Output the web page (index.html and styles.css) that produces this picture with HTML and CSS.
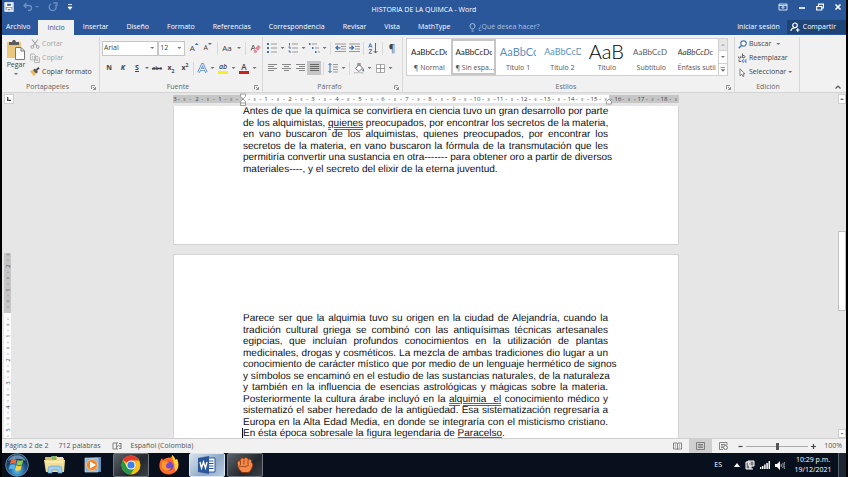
FILE: index.html
```html
<!DOCTYPE html>
<html lang="es">
<head>
<meta charset="utf-8">
<title>HISTORIA DE LA QUIMCA - Word</title>
<link rel="stylesheet" href="styles.css">
</head>
<body>
<div class="window">
  <header class="titlebar">
    <div class="quick">
      <button aria-label="Guardar"><svg width="10" height="10" viewBox="0 0 10 10"><path d="M1 1h8v8H1z M2.500 1v3.500h5V1 M3 9V6.500h4V9" fill="none" stroke="#fff" stroke-width="1.300"/></svg></button>
      <button class="dim" aria-label="Deshacer"><svg width="10" height="10" viewBox="0 0 10 10"><path d="M3.500 1 1 3.500 3.500 6 M1 3.500h5a2.500 2.500 0 0 1 0 5H5" fill="none" stroke="currentColor" stroke-width="1.300"/></svg><i class="caret"></i></button>
      <button class="dim" aria-label="Rehacer"><svg width="10" height="10" viewBox="0 0 10 10"><path d="M3 2a3.500 3.500 0 1 0 4.500 1 M5.500 1H9v3" fill="none" stroke="currentColor" stroke-width="1.300"/></svg></button>
      <button class="more" aria-label="Personalizar"><svg width="6" height="8" viewBox="0 0 6 8"><path d="M1 1.500h4M1 4l2 2.500L5 4z" fill="#fff" stroke="#fff" stroke-width=".8"/></svg></button>
    </div>
    <h1>HISTORIA DE LA QUIMCA - Word</h1>
    <div class="controls">
      <button aria-label="Opciones de la cinta"><svg width="10" height="8" viewBox="0 0 10 8"><path d="M1 1h8v6H1z M1 2.500h8 M5 6V3.500 M3.500 5 5 3.500 6.500 5" fill="none" stroke="#fff" stroke-width=".8"/></svg></button>
      <button aria-label="Minimizar"><svg width="8" height="8" viewBox="0 0 8 8"><path d="M1 5h6" stroke="#fff" stroke-width="1.600"/></svg></button>
      <button aria-label="Restaurar"><svg width="8" height="8" viewBox="0 0 8 8"><path d="M2.500 3V1.200h5V5H6 M.7 3.500h5V7h-5z" fill="none" stroke="#fff" stroke-width="1.200"/></svg></button>
      <button aria-label="Cerrar"><svg width="8" height="8" viewBox="0 0 8 8"><path d="M1.500 1.500l5 5M6.500 1.500l-5 5" stroke="#fff" stroke-width="1.600"/></svg></button>
    </div>
  </header>

  <nav class="tabs">
    <button class="file">Archivo</button>
    <button class="active">Inicio</button>
    <button>Insertar</button>
    <button>Diseño</button>
    <button>Formato</button>
    <button>Referencias</button>
    <button>Correspondencia</button>
    <button>Revisar</button>
    <button>Vista</button>
    <button>MathType</button>
    <button class="tell"><svg width="7" height="9" viewBox="0 0 7 9"><path d="M2.500 6C2 5 1 4.500 1 3a2.500 2.500 0 0 1 5 0c0 1.500-1 2-1.500 3z M2.500 8h2" fill="none" stroke="currentColor"/></svg>¿Qué desea hacer?</button>
    <button class="login">Iniciar sesión</button>
    <button class="share"><svg width="10" height="10" viewBox="0 0 10 10"><circle cx="5" cy="3.300" r="2.300" fill="none" stroke="#fff" stroke-width="1.200"/><path d="M1 9c0-2 1.500-3 3.500-3.200M6 8h3.500M7.700 6.200v3.500" fill="none" stroke="#fff" stroke-width="1.200"/></svg>Compartir</button>
  </nav>

  <section class="ribbon">
    <div class="group clip">
      <div class="clip-body">
        <button class="paste"><svg width="20" height="20" viewBox="0 0 20 20"><path d="M1 2h14v16H1z" fill="#e9c77d"/><path d="M3 2h3l1-2h2l1 2h3v3H3z" fill="#5b5b5b"/><path d="M9.500 7.500h5.500l3.500 3.500v8.500h-9z" fill="#fff" stroke="#777"/><path d="M15 7.500V11h3.500" fill="none" stroke="#777"/></svg>Pegar<i class="caret"></i></button>
        <div class="clip-list">
          <button class="off"><svg width="10" height="10" viewBox="0 0 10 10"><path d="M2 .5 7 7M8 .5 3 7" stroke="#a5a5a5" stroke-width="1.200"/><circle cx="2.300" cy="8" r="1.400" fill="none" stroke="#a5a5a5"/><circle cx="7.700" cy="8" r="1.400" fill="none" stroke="#a5a5a5"/></svg>Cortar</button>
          <button class="off"><svg width="10" height="10" viewBox="0 0 10 10"><path d="M.5 1h3.500l1.500 1.500V7h-5z M4.500 3.500H8l1.500 1.500v4.500h-5z M6 6h2M6 7.500h2M2 3.500h1M2 5h1" fill="#eee" stroke="#aaa" stroke-width=".8"/></svg>Copiar</button>
          <button><svg width="10" height="10" viewBox="0 0 10 10"><path d="M0 4l3-1 3 3-2 3.500C3 8 1 6 0 4z" fill="#e8bd68"/><path d="M3 3l2-1.500L8 5 6 6.500z" fill="#555"/><path d="M6.500 3 9 .8" stroke="#444" stroke-width="1.800"/></svg>Copiar formato</button>
        </div>
      </div>
      <div class="caption"><span>Portapapeles</span><svg class="launch" width="5" height="5" viewBox="0 0 5 5"><path d="M.5 4V.5H4M2 2l2.500 2.500M4.500 2v2.500H2" fill="none" stroke="#777" stroke-width=".8"/></svg></div>
    </div>

    <div class="group">
      <div class="row">
        <label class="combo face"><select aria-label="Fuente"><option>Arial</option></select><i class="caret"></i></label>
        <label class="combo size"><select aria-label="Tamaño"><option>12</option></select><i class="caret"></i></label>
        <button class="tool big" aria-label="Aumentar">A<sup class="up"></sup></button>
        <button class="tool" aria-label="Reducir">A<sup class="down"></sup></button>
        <i class="sep"></i>
        <button class="tool drop wide"><span>Aa</span><i class="caret"></i></button>
        <i class="sep"></i>
        <button class="tool" aria-label="Borrar formato"><svg width="11" height="11" viewBox="0 0 11 11"><path d="M1 7.500 3.200 2l2 4M2 5.500h2" fill="none" stroke="#666"/><path d="M3.500 7.500 8 2l2.700 2L6.500 9.500 4.500 10z" fill="#e4879a"/><path d="M5 6l3 2.200" stroke="#fff" stroke-width=".7"/></svg></button>
      </div>
      <div class="row">
        <button class="tool bold">N</button>
        <button class="tool bold ital">K</button>
        <button class="tool bold drop s"><span class="ul">S</span><i class="caret"></i></button>
        <button class="tool strike">abc</button>
        <button class="tool bold">x<sub>2</sub></button>
        <button class="tool bold">x<sup>2</sup></button>
        <i class="sep thin"></i>
        <button class="tool drop" aria-label="Efectos de texto"><svg width="11" height="11" viewBox="0 0 11 11"><path d="M1.500 9.500 5.500 1l4 8.500M3.500 6.500h4" fill="none" stroke="#5f8fce" stroke-width="2.600"/><path d="M1.500 9.500 5.500 1l4 8.500M3.500 6.500h4" fill="none" stroke="#f5f9ff" stroke-width="1"/></svg><i class="caret"></i></button>
        <button class="tool drop mark"><span>ab</span><i class="caret"></i></button>
        <button class="tool drop color"><span>A</span><i class="caret"></i></button>
      </div>
      <div class="caption"><span>Fuente</span><svg class="launch" width="5" height="5" viewBox="0 0 5 5"><path d="M.5 4V.5H4M2 2l2.500 2.500M4.500 2v2.500H2" fill="none" stroke="#777" stroke-width=".8"/></svg></div>
    </div>

    <div class="group">
      <div class="row">
        <button class="tool drop" aria-label="Viñetas"><svg width="10" height="10" viewBox="0 0 10 10"><path d="M0 1h2M0 5h2M0 9h2" stroke="#3f6fae" stroke-width="1.800"/><path d="M4 1h6M4 5h6M4 9h6" stroke="#999"/></svg><i class="caret"></i></button>
        <button class="tool drop" aria-label="Numeración"><svg width="10" height="10" viewBox="0 0 10 10"><path d="M1.500 0v2.500M.5 4h1.500v2M.5 8h1.500v2" fill="none" stroke="#3f6fae"/><path d="M4 1h6M4 5h6M4 9h6" stroke="#999"/></svg><i class="caret"></i></button>
        <button class="tool drop" aria-label="Lista multinivel"><svg width="11" height="10" viewBox="0 0 11 10"><path d="M0 1h1.500M3 5h1.500M6 9h1.500" stroke="#3f6fae" stroke-width="1.800"/><path d="M3 1h5M6 5h4M9 9h2" stroke="#999"/></svg><i class="caret"></i></button>
        <i class="sep"></i>
        <button class="tool" aria-label="Disminuir sangría"><svg width="11" height="10" viewBox="0 0 11 10"><path d="M0 1h11M6 3.500h5M6 6h5M0 8.500h11" stroke="#999"/><path d="M5.500 4.800H1M3 2.800l-2 2 2 2" fill="none" stroke="#3f6fae" stroke-width="1.300"/></svg></button>
        <button class="tool" aria-label="Aumentar sangría"><svg width="11" height="10" viewBox="0 0 11 10"><path d="M0 1h11M6 3.500h5M6 6h5M0 8.500h11" stroke="#999"/><path d="M0 4.800h4.500M2.500 2.800l2 2-2 2" fill="none" stroke="#3f6fae" stroke-width="1.300"/></svg></button>
        <i class="sep"></i>
        <button class="tool" aria-label="Ordenar"><svg width="10" height="11" viewBox="0 0 10 11"><path d="M.7 4.500 2.300.5 4 4.500M1.200 3.300h2.200M1 6.500h2.800L1 10.300h3" fill="none" stroke="#3f6fae" stroke-width=".9"/><path d="M7.500 0v10M5.500 8l2 2 2-2" fill="none" stroke="#666"/></svg></button>
        <i class="sep"></i>
        <button class="tool pilcrow">¶</button>
      </div>
      <div class="row">
        <button class="tool" aria-label="Alinear a la izquierda"><svg width="9" height="8" viewBox="0 0 9 8"><path d="M0 .5h9M0 2.500h6M0 4.500h9M0 6.500h6" stroke="#888"/></svg></button>
        <button class="tool" aria-label="Centrar"><svg width="9" height="8" viewBox="0 0 9 8"><path d="M0 .5h9M2 2.500h5M0 4.500h9M2 6.500h5" stroke="#888"/></svg></button>
        <button class="tool" aria-label="Alinear a la derecha"><svg width="9" height="8" viewBox="0 0 9 8"><path d="M0 .5h9M3 2.500h6M0 4.500h9M3 6.500h6" stroke="#888"/></svg></button>
        <button class="tool on" aria-label="Justificar"><svg width="9" height="8" viewBox="0 0 9 8"><path d="M0 .5h9M0 2.500h9M0 4.500h9M0 6.500h9" stroke="#666"/></svg></button>
        <i class="sep"></i>
        <button class="tool drop" aria-label="Interlineado"><svg width="10" height="10" viewBox="0 0 10 10"><path d="M2 .5v9M.5 2 2 .5 3.500 2M.5 8 2 9.500 3.500 8" fill="none" stroke="#3f6fae"/><path d="M5 1.500h5M5 4h5M5 6.500h5M5 9h5" stroke="#999"/></svg><i class="caret"></i></button>
        <i class="sep"></i>
        <button class="tool drop" aria-label="Sombreado"><svg width="11" height="11" viewBox="0 0 11 11"><path d="M5 1.500 1.500 5.500 5 8.500 8.500 5z M4 3V0h2v3" fill="#fff" stroke="#666" stroke-width=".9"/><path d="M9 5c1 1.500 1.500 3 .5 3.500S8 7 9 5z" fill="#3f6fae"/><path d="M0 9.500h9v1.500H0z" fill="#fff" stroke="#999" stroke-width=".5"/></svg><i class="caret"></i></button>
        <button class="tool drop" aria-label="Bordes"><svg width="9" height="9" viewBox="0 0 9 9"><path d="M.5.5h8v8h-8z" fill="#fff" stroke="#aaa"/><path d="M4.500 0v9M0 4.500h9" stroke="#999"/></svg><i class="caret"></i></button>
      </div>
      <div class="caption"><span>Párrafo</span><svg class="launch" width="5" height="5" viewBox="0 0 5 5"><path d="M.5 4V.5H4M2 2l2.500 2.500M4.500 2v2.500H2" fill="none" stroke="#777" stroke-width=".8"/></svg></div>
    </div>

    <div class="group styles">
      <div class="gallery">
        <button><span class="sample">AaBbCcDc</span><span class="name">¶ Normal</span></button>
        <button class="chosen"><span class="sample">AaBbCcDc</span><span class="name">¶ Sin espa...</span></button>
        <button><span class="sample h1">AaBbCc</span><span class="name">Título 1</span></button>
        <button><span class="sample h2">AaBbCcD</span><span class="name">Título 2</span></button>
        <button><span class="sample title">AaB</span><span class="name">Título</span></button>
        <button><span class="sample sub">AaBbCcD</span><span class="name">Subtítulo</span></button>
        <button><span class="sample em">AaBbCcDc</span><span class="name">Énfasis sutil</span></button>
        <div class="pager">
          <button class="offp" aria-label="Anterior"><i class="caret flip"></i></button>
          <button aria-label="Siguiente"><i class="caret"></i></button>
          <button aria-label="Más"><i class="caret bar"></i></button>
        </div>
      </div>
      <div class="caption"><span>Estilos</span><svg class="launch" width="5" height="5" viewBox="0 0 5 5"><path d="M.5 4V.5H4M2 2l2.500 2.500M4.500 2v2.500H2" fill="none" stroke="#777" stroke-width=".8"/></svg></div>
    </div>

    <div class="group">
      <div class="edit-list">
        <button><svg width="9" height="9" viewBox="0 0 9 9"><circle cx="5.500" cy="3.500" r="2.700" fill="#fff" stroke="#4a79b5" stroke-width="1.200"/><path d="M3.500 5.500.8 8.200" stroke="#4a79b5" stroke-width="1.600"/></svg>Buscar <i class="caret far"></i></button>
        <button><svg width="9" height="10" viewBox="0 0 9 10"><path d="M.5 3.500a1.200 1.200 0 1 0 2.200 0V5M4.500.5v4M4.500 3.500a1.200 1.200 0 1 1 0 .5M1 6.500v2h2" fill="none" stroke="#555" stroke-width=".9"/><path d="M6 7a1.200 1.200 0 1 0 0 2M8.700 7a1.200 1.200 0 1 0 0 2" fill="none" stroke="#3f6fae"/></svg>Reemplazar</button>
        <button><svg width="9" height="9" viewBox="0 0 9 9"><path d="M2 .8v7l1.700-1.600L5 8.600l1-.5-1-2.300h2z" fill="#fff" stroke="#666" stroke-width=".8"/></svg>Seleccionar<i class="caret"></i></button>
      </div>
      <div class="caption"><span>Edición</span></div>
    </div>
    <button class="collapse" aria-label="Contraer"><svg width="6" height="4" viewBox="0 0 6 4"><path d="M.5 3.500 3 1l2.500 2.500" fill="none" stroke="#555" stroke-width="1.200"/></svg></button>
  </section>

  <main class="work">
    <div class="desk">
      <div class="topruler">
        <div class="tabstop"><svg width="4" height="4" viewBox="0 0 4 4"><path d="M.7 0v3.300H4" fill="none" stroke="#444" stroke-width="1.300"/></svg></div>
        <svg class="hruler" width="506" height="13" viewBox="0 0 506 13">
          <defs><pattern id="hm" x="70" width="23.400" height="14" patternUnits="userSpaceOnUse"><path d="M5.500 6.500h1M17 6.500h1M11.700 5v3" stroke="#777"/></pattern></defs>
          <rect y="2" width="506" height="8" fill="#c6c6c6"/>
          <rect x="70" y="2" width="366" height="8" fill="#fff"/>
          <rect y="2" width="506" height="8" fill="url(#hm)"/>
          <g class="nums">
            <text x="2" y="8">3</text><text x="24" y="8">2</text><text x="47" y="8">1</text>
            <text x="93" y="8">1</text><text x="117" y="8">2</text><text x="140" y="8">3</text><text x="164" y="8">4</text><text x="187" y="8">5</text><text x="210" y="8">6</text><text x="234" y="8">7</text><text x="257" y="8">8</text><text x="281" y="8">9</text><text x="304" y="8">10</text><text x="327" y="8">11</text><text x="351" y="8">12</text><text x="374" y="8">13</text><text x="398" y="8">14</text><text x="421" y="8">15</text><text x="445" y="8">16</text><text x="468" y="8">17</text><text x="491" y="8">18</text>
          </g>
          <path d="M67.500 1h5v2.500L70 6l-2.500-2.500z M70 6l2.500 2.500v4h-5v-4z M67.500 10h5 M436 6l2.500 2.500V11h-5V8.500z" fill="#fff" stroke="#888" stroke-width=".8"/>
        </svg>
      </div>
      <div class="canvas">
        <svg class="vruler" width="7" height="185" viewBox="0 0 7 185">
          <defs><pattern id="vm" y="60" width="7" height="23.400" patternUnits="userSpaceOnUse"><path d="M4 5.500v1M4 17v1M2.500 11.700h3" stroke="#777"/></pattern></defs>
          <rect width="7" height="60" fill="#c6c6c6"/>
          <rect y="60" width="7" height="126" fill="#fff"/>
          <rect width="7" height="186" fill="url(#vm)"/>
          <g class="nums">
            <text transform="translate(6 13) rotate(-90)">2</text><text transform="translate(6 37) rotate(-90)">1</text><text transform="translate(6 83) rotate(-90)">1</text><text transform="translate(6 107) rotate(-90)">2</text><text transform="translate(6 130) rotate(-90)">3</text><text transform="translate(6 154) rotate(-90)">4</text><text transform="translate(6 177) rotate(-90)">5</text>
          </g>
        </svg>
        <div class="pages">
          <article class="page first">
            <p>Antes de que la química se convirtiera en ciencia tuvo un gran desarrollo por parte<br>
            de los alquimistas, <span class="gram">quienes</span> preocupados, por encontrar los secretos de la materia,<br>
            en vano buscaron de los alquimistas, quienes preocupados, por encontrar los<br>
            secretos de la materia, en vano buscaron la fórmula de la transmutación que les<br>
            permitiría convertir una sustancia en otra------- para obtener oro a partir de diversos<br>
            <span class="last">materiales----, y el secreto del elixir de la eterna juventud.</span></p>
          </article>
          <article class="page second">
            <p>Parece ser que la alquimia tuvo su origen en la ciudad de Alejandría, cuando la<br>
            tradición cultural griega se combinó con las antiquísimas técnicas artesanales<br>
            egipcias, que incluían profundos conocimientos en la utilización de plantas<br>
            medicinales, drogas y cosméticos. La mezcla de ambas tradiciones dio lugar a un<br>
            conocimiento de carácter místico que por medio de un lenguaje hermético de signos<br>
            y símbolos se encaminó en el estudio de las sustancias naturales, de la naturaleza<br>
            y también en la influencia de esencias astrológicas y mágicas sobre la materia.<br>
            Posteriormente la cultura árabe incluyó en la <span class="gram">alquimia&nbsp; el</span> conocimiento médico y<br>
            sistematizó el saber heredado de la antigüedad. Esa sistematización regresaría a<br>
            Europa en la Alta Edad Media, en donde se integraría con el misticismo cristiano.<br>
            <span class="last cursor">En ésta época sobresale la figura legendaria de <span class="spell">Paracelso</span>.</span></p>
          </article>
        </div>
      </div>
    </div>
    <div class="scroll">
      <button aria-label="Subir"><i class="caret flip"></i></button>
      <span class="thumb"></span>
      <button class="dn" aria-label="Bajar"><i class="caret"></i></button>
    </div>
  </main>

  <footer class="status">
    <span class="pg">Página 2 de 2</span>
    <span class="words">712 palabras</span>
    <svg class="proof" width="10" height="8" viewBox="0 0 10 8"><path d="M1 1h3.500v6H1z M4.500 1H6M4.500 7H6M7 1.500h2M7 4h2M7 6.500h2M9 1v6M6.500 3l-1.500 2" fill="none" stroke="#777" stroke-width=".9"/></svg>
    <span class="lang">Español (Colombia)</span>
    <button class="view" aria-label="Modo de lectura"><svg width="9" height="8" viewBox="0 0 9 8"><path d="M.5 1h3.500l.5.500.5-.5h3.500v6H5l-.5.500L4 7H.5z M4.500 1.500v6M2 3h1M2 5h1M6 3h1M6 5h1" fill="none" stroke="#777" stroke-width=".9"/></svg></button>
    <button class="view on" aria-label="Diseño de impresión"><svg width="9" height="8" viewBox="0 0 9 8"><path d="M.5.5h8v7h-8z M2 2.500h5M2 4h5M2 5.500h5" fill="none" stroke="#777" stroke-width=".9"/></svg></button>
    <button class="view" aria-label="Diseño web"><svg width="9" height="8" viewBox="0 0 9 8"><path d="M8 3V.5H.5v7H4 M2 2.500h4.500M2 4h2M2 5.500h2" fill="none" stroke="#777" stroke-width=".9"/><circle cx="6.500" cy="5.500" r="2" fill="#eee" stroke="#666" stroke-width=".9"/></svg></button>
    <button class="zoom" aria-label="Alejar"><svg width="5" height="5" viewBox="0 0 5 5"><path d="M.5 2.500h4" stroke="#444" stroke-width="1.200"/></svg></button>
    <input type="range" min="10" max="190" value="100" aria-label="Zoom">
    <button class="zoom" aria-label="Acercar"><svg width="5" height="5" viewBox="0 0 5 5"><path d="M0 2.500h5M2.500 0v5" stroke="#444" stroke-width="1.200"/></svg></button>
    <span class="pct">100%</span>
  </footer>

  <div class="taskbar">
    <button aria-label="Inicio de Windows"><svg width="24" height="24" viewBox="0 0 24 24"><defs><radialGradient id="orb" cy=".75"><stop offset="0" stop-color="#5fc6ee"/><stop offset=".6" stop-color="#2a6ea8"/><stop offset="1" stop-color="#163c66"/></radialGradient></defs><circle cx="12" cy="12" r="11.300" fill="url(#orb)" stroke="#7d9fbd" stroke-width=".8"/><path d="M3 8a10 10 0 0 1 18 0c-5-3-12-3-18 0z" fill="#a8c6df" opacity=".6"/><path d="M6 7c2-1.300 3.500-1.200 5.500-.3L10.500 11c-2-.9-3.500-.9-5.500.2z" fill="#ee6a35"/><path d="M12.500 7c2 1 3.500 1 5.800 0l-1.200 4.500c-2 1-3.600 1-5.600 0z" fill="#8fc84a"/><path d="M4.800 12.200c2-1.100 3.500-1.100 5.500-.2L9.200 16.400c-2-.9-3.500-.9-5.500.2z" fill="#55b3ec"/><path d="M11.200 12.500c2 1 3.600 1 5.600 0l-1.200 4.500c-2 1-3.500 1-5.500 0z" fill="#fbd143"/></svg></button>
    <button aria-label="Explorador"><svg width="22" height="20" viewBox="0 0 22 20"><path d="M1 2h6l1-1h5v2h7v13H2z" fill="#d8bd62"/><path d="M8 1h4v5H8z" fill="#7db76a"/><path d="M13 2h6v5h-6z" fill="#e9e6c0"/><path d="M0 5h21l-1 12H2z" fill="#f3df94"/><path d="M2 7h17" stroke="#fff5c8"/><path d="M4 18v-4a3 3 0 0 1 3-3h8a3 3 0 0 1 3 3v4h-4v-3H8v3z" fill="#9fcdec" stroke="#6da3cd" stroke-width=".7"/></svg></button>
    <button aria-label="Reproductor"><svg width="18" height="18" viewBox="0 0 18 18"><path d="M5 2l12-1v15L5 15z" fill="#638fb9"/><path d="M1 2h13v14H1z" fill="#8eb8da" stroke="#bdd9ee" stroke-width=".7"/><circle cx="8" cy="9" r="5.500" fill="#f08529" stroke="#f9be83"/><path d="M6 5.500 12 9l-6 3.500z" fill="#fff"/></svg></button>
    <button class="open" aria-label="Chrome"><svg width="20" height="20" viewBox="0 0 20 20"><circle cx="10" cy="10" r="9.500" fill="#fbc116"/><path d="M10 10 1.800 5.200A9.500 9.500 0 0 1 18.300 5.500H10z" fill="#e33b2e"/><path d="M1.800 5.200A9.500 9.500 0 0 0 9.500 19.500L14 12.200 6 12z" fill="#279847"/><circle cx="10" cy="10" r="4.600" fill="#fff"/><circle cx="10" cy="10" r="3.600" fill="#3f80e8"/></svg></button>
    <button aria-label="Firefox"><svg width="20" height="20" viewBox="0 0 20 20"><path d="M10 2.500C12 3 13 2 13 0c2 2 3 3 3.500 5L18 4c2 4 2 8 0 11-3 5-11 6-15 2C-1 13 0 7 3 3l1 2c1-1 3-2 6-2.500z" fill="#ff6a2b"/><path d="M13 0c2 2 3 3 3.500 5L18 4c2 5 1.500 9-1 12-2-2-1-5-2-8S13 3 13 0z" fill="#ffd33d"/><circle cx="10" cy="11" r="4.500" fill="#7948c9"/><path d="M3 7c2-2 5-1 7 1-2 0-3 1-3 3s2 3 5 2c-2 4-8 3-9-1z" fill="#ff9a28"/></svg></button>
    <button class="open current" aria-label="Word"><svg width="18" height="18" viewBox="0 0 18 18"><path d="M9 2h8v14H9z" fill="#fff" stroke="#2b579a"/><path d="M11 5h4.500M11 7.500h4.500M11 10h4.500M11 12.500h4.500" stroke="#2b579a"/><path d="M0 2 11 0v18L0 16z" fill="#2b579a"/><path d="M2 6l1.500 6 2-6 2 6L9 6" fill="none" stroke="#fff" stroke-width="1.400"/></svg></button>
    <button class="open" aria-label="Juego"><svg width="18" height="18" viewBox="0 0 18 18"><path d="M1.500 9c-1-3 1-5 2.500-4C4 2 7 1 8 3c1-2.500 4-1.500 4 .5 2-1 4 0 3.500 3 2 1 1.500 3 .5 5-1 3-2 4.500-4 5H6C4 15 2 12 1.500 9z" fill="#f58a48" stroke="#8c3812"/><path d="M4.500 5v4M8 3.500V8.500M12 4v4.500M3 10c4 1 7 1 10-1" fill="none" stroke="#8c3812" stroke-width=".8"/></svg></button>
    <div class="tray">
      <span class="es">ES</span>
      <svg width="6" height="4" viewBox="0 0 6 4"><path d="M3 0l3 4H0z" fill="#fff"/></svg>
      <svg width="10" height="10" viewBox="0 0 10 10"><path d="M1 2h4v7H1z M3 1h6v5H4z M6 6v3M5 9h3" fill="#777" stroke="#fff"/></svg>
      <svg width="10" height="8" viewBox="0 0 10 8"><path d="M.5 6v2M2.700 5v3M4.900 3.500V8M7.100 2v6M9.300 0v8" stroke="#fff" stroke-width="1.500"/></svg>
      <svg width="10" height="9" viewBox="0 0 10 9"><path d="M0 3h2l3-3v9L2 6H0z" fill="#fff"/><path d="M6.200 3v3M7.700 2c.8 1.500.8 3.500 0 5M9.200 1c1 2 1 5 0 7" fill="none" stroke="#ccc" stroke-width=".8"/></svg>
      <time datetime="2021-12-19T22:29">10:29 p.m.<br>19/12/2021</time>
      <span class="peek"></span>
    </div>
  </div>
</div>
</body>
</html>
```
FILE: styles.css
```css
* { box-sizing: border-box; }
body {
  margin: 0;
  background: #000;
  font-family: "Open Sans", "Noto Sans", sans-serif;
  font-size: 7px;
  line-height: 10px;
  color: #444;
}
button, select {
  margin: 0;
  padding: 0;
  border: 0;
  background: none;
  font: inherit;
  color: inherit;
  white-space: nowrap;
}
svg { display: block; flex: none; }
.window {
  display: flex;
  flex-direction: column;
  height: 100vh;
  margin: 0 2px;
  background: #e6e6e6;
  overflow: hidden;
}
.caret {
  flex: none;
  width: 4px;
  height: 2px;
  background: currentColor;
  opacity: .75;
  clip-path: polygon(0 0, 100% 0, 50% 100%);
}
.caret.flip { clip-path: polygon(50% 0, 100% 100%, 0 100%); }
.caret.bar { height: 5px; width: 5px; clip-path: polygon(0 0, 100% 0, 100% 20%, 0 20%, 0 50%, 100% 50%, 50% 100%, 0 50%); }

/* Title bar */
.titlebar {
  display: grid;
  grid-template-columns: 1fr auto 1fr;
  height: 20px;
  background: #2a579a;
  color: #fff;
}
.titlebar h1 { margin: 0; padding-top: 5px; font-size: 7px; font-weight: 400; }
.quick { display: flex; align-items: center; gap: 9px; height: 14px; padding-left: 2px; }
.quick button { display: flex; align-items: center; gap: 2px; }
.dim { color: #6d8fc2; }
.controls { display: flex; justify-content: flex-end; align-items: center; gap: 10px; height: 14px; padding-right: 4px; }

/* Tabs */
.tabs { display: flex; height: 15px; background: #2a579a; color: #fff; border-bottom: 1px solid #2a579a; }
.tabs button { padding: 0 9px; }
.tabs .file { padding: 0 8px 0 4px; }
.tabs .active { background: #f1f1f1; color: #2a579a; margin-bottom: -1px; }
.tabs .tell { display: flex; align-items: center; gap: 3px; color: #a9c0e2; }
.tabs .login { margin-left: auto; padding-right: 7px; }
.tabs .share { display: flex; align-items: center; gap: 3px; padding: 0 10px 0 3px; background: #1e4377; }

/* Ribbon */
.ribbon {
  display: grid;
  grid-template-columns: 98px 163px 140px 1fr 65px 46px;
  height: 58px;
  background: #f1f1f1;
  border-bottom: 1px solid #d4d4d4;
}
.group {
  display: flex;
  flex-direction: column;
  margin: 2px 0 0;
  padding-left: 2px;
  border-right: 1px solid #d8d8d8;
  min-width: 0;
}
.caption { display: flex; align-items: center; margin-top: auto; height: 10px; color: #666; }
.caption span { flex: 1; text-align: center; }
.launch { margin-right: 3px; }
.clip-body { display: flex; }
.paste { display: flex; flex-direction: column; align-items: center; width: 24px; padding-top: 3px; }
.paste .caret { margin-top: 3px; }
.clip-list, .edit-list { display: flex; flex-direction: column; gap: 4px; padding-top: 2px; }
.clip-list button, .edit-list button { display: flex; align-items: center; gap: 2px; height: 10px; }
.clip-list { padding-left: 2px; }
.edit-list { padding-left: 1px; }
.far { margin-left: 3px; }
.off { color: #a5a5a5; }

.row { display: flex; align-items: center; height: 20px; }
.row:first-child { margin-top: 1px; }
.combo { display: grid; align-items: center; height: 15px; background: #fff; border: 1px solid #c6c6c6; }
.combo select, .combo .caret { grid-area: 1 / 1; }
.combo select { appearance: none; padding-left: 1px; width: 100%; }
.combo .caret { justify-self: end; margin-right: 3px; }
.face { width: 58px; }
.size { width: 28px; margin-right: 2px; }
.tool { display: flex; align-items: center; justify-content: center; width: 14px; height: 14px; }
.tool.on { background: #c5c5c5; }
.tool sup, .tool sub { font-size: 5px; line-height: 5px; }
.tool sup { align-self: flex-start; margin-top: 2px; }
.tool sub { align-self: flex-end; margin-bottom: 1px; }
.tool .up, .tool .down { width: 4px; height: 2px; background: #3f6fae; clip-path: polygon(50% 0, 100% 100%, 0 100%); }
.tool .down { clip-path: polygon(0 0, 100% 0, 50% 100%); }
.big { font-size: 8px; }
.bold { font-weight: 700; }
.ital { font-style: italic; }
.ul { text-decoration: underline; }
.strike { font-size: 6px; font-weight: 600; text-decoration: line-through; }
.drop { width: 21px; display: grid; grid-template-columns: 14px 7px; justify-items: center; }
.drop.s { grid-template-columns: 14px 6px; width: 20px; }
.drop.wide { width: 24px; grid-template-columns: 15px 9px; font-size: 8px; }
.mark span, .color span { width: 10px; height: 11px; line-height: 8px; text-align: center; border-bottom: 3px solid #f7ee24; }
.mark span { font-style: italic; font-weight: 600; }
.color span { border-color: #c9211e; font-size: 8px; font-weight: 600; }
.pilcrow { font-size: 10px; }
.sep { width: 1px; height: 13px; margin: 0 2px; background: #d8d8d8; }
.sep.thin { margin: 0 1px; }

.styles { padding: 0 0 0 3px; }
.gallery { display: flex; height: 38px; margin: 1px 6px 0 0; background: #fff; border: 1px solid #d0d0d0; }
.gallery > button { display: flex; flex-direction: column; flex: 1; min-width: 0; padding: 0 2px; border: 2px solid transparent; }
.gallery .chosen { border-color: #c6c6c6; }
.sample {
  width: 100%;
  height: 22px;
  line-height: 22px;
  overflow: hidden;
  text-align: left;
  font-family: Lato, sans-serif;
  font-size: 8px;
  color: #222;
}
.name { width: 100%; text-align: center; color: #555; }
.sample.h1 { font-size: 11px; color: #5b8fc4; }
.sample.h2 { font-size: 9px; color: #5b8fc4; }
.sample.title { font-size: 20px; font-weight: 300; line-height: 20px; color: #000; }
.sample.sub { color: #5a5a5a; }
.sample.em { font-style: italic; color: #404040; }
.pager { display: flex; flex-direction: column; width: 9px; border-left: 1px solid #d0d0d0; }
.pager button { flex: 1; display: grid; place-items: center; }
.pager button + button { border-top: 1px solid #d0d0d0; }
.offp { background: #e6e6e6; color: #999; }
.collapse { align-self: end; justify-self: end; padding: 0 5px 3px 0; }

/* Workspace */
.work { display: flex; flex: 1; min-height: 0; }
.desk { display: flex; flex-direction: column; flex: 1; min-width: 0; }
.topruler { display: grid; grid-template-columns: 10px 1fr; height: 13px; padding-left: 2px; }
.tabstop { display: grid; place-items: center; width: 10px; height: 10px; margin-top: 1px; background: #fff; border: 1px solid #d0d0d0; }
.hruler { justify-self: center; }
.nums { font-size: 6px; fill: #444; text-anchor: middle; }
.canvas { display: grid; grid-template-columns: 10px 1fr; flex: 1; min-height: 0; overflow: hidden; padding-left: 2px; }
.vruler { align-self: end; }
.pages { display: flex; flex-direction: column; align-items: center; gap: 9px; min-height: 0; overflow: hidden; }
.page { flex: none; width: 506px; padding: 0 70px 0 69px; background: #fff; border: 1px solid #d4d4d4; }
.first { border-top: 0; padding-bottom: 69px; }
.second { padding-top: 58px; padding-bottom: 70px; }
.page p {
  margin: 0;
  font-family: "Liberation Sans", Arial, sans-serif;
  font-size: 10px;
  line-height: 1.15;
  text-rendering: geometricPrecision;
  color: #111;
  white-space: nowrap;
  text-align: justify;
  text-align-last: justify;
}
.last { display: block; text-align-last: left; }
.cursor { border-left: 1px solid #111; margin-left: -1px; }
.gram { text-decoration: underline double #3c62c4 1px; }
.spell { text-decoration: underline #d33 1px; }

.scroll { display: grid; grid-template-rows: 10px 127fr 80px 118fr 9px; width: 8px; padding-top: 1px; }
.scroll button { display: grid; place-items: center; background: #fff; border: 1px solid #cfcfcf; }
.scroll .thumb { grid-row: 3; background: #fff; border: 1px solid #c0c0c0; }
.scroll .dn { grid-row: 5; }

/* Status bar */
.status { display: flex; align-items: center; height: 15px; padding: 0 4px 0 3px; background: #f1f1f1; border-top: 1px solid #d0d0d0; color: #555; }
.words { margin-left: 10px; }
.proof { margin: 0 9px 0 11px; }
.view { display: grid; place-items: center; width: 23px; height: 14px; }
.lang { margin-right: auto; }
.view.on { background: #cfcfcf; }
.zoom { padding: 0 3px; }
.status input { appearance: none; width: 62px; height: 10px; margin: 0; background: linear-gradient(#aaa, #aaa) center / 100% 1px no-repeat; }
.status input::-webkit-slider-thumb { appearance: none; width: 3px; height: 7px; background: #555; }
.pct { margin-left: 5px; }

/* Taskbar */
.taskbar { display: flex; align-items: center; height: 24px; padding-left: 2px; background: #07101c; color: #fff; }
.taskbar > button { display: grid; place-items: center; width: 38px; height: 24px; }
.taskbar > button:first-child { width: 26px; margin-right: 6px; }
.taskbar .open { width: 36px; margin: 0 1px; background: linear-gradient(135deg, #5b6168, #23282e 60%, #3a4047); border: 1px solid #71777e; border-radius: 2px; }
.taskbar .current { background: linear-gradient(135deg, #d7e2ee, #8fa9c6 60%, #b9cde2); border-color: #dde7f1; }
.tray { display: flex; align-items: center; gap: 5px; height: 24px; margin-left: auto; }
.es { margin-right: 7px; }
.tray time { width: 46px; text-align: center; line-height: 10px; }
.peek { width: 8px; height: 24px; background: #1c2733; border-left: 1px solid #55606c; margin-left: -3px; }
```
